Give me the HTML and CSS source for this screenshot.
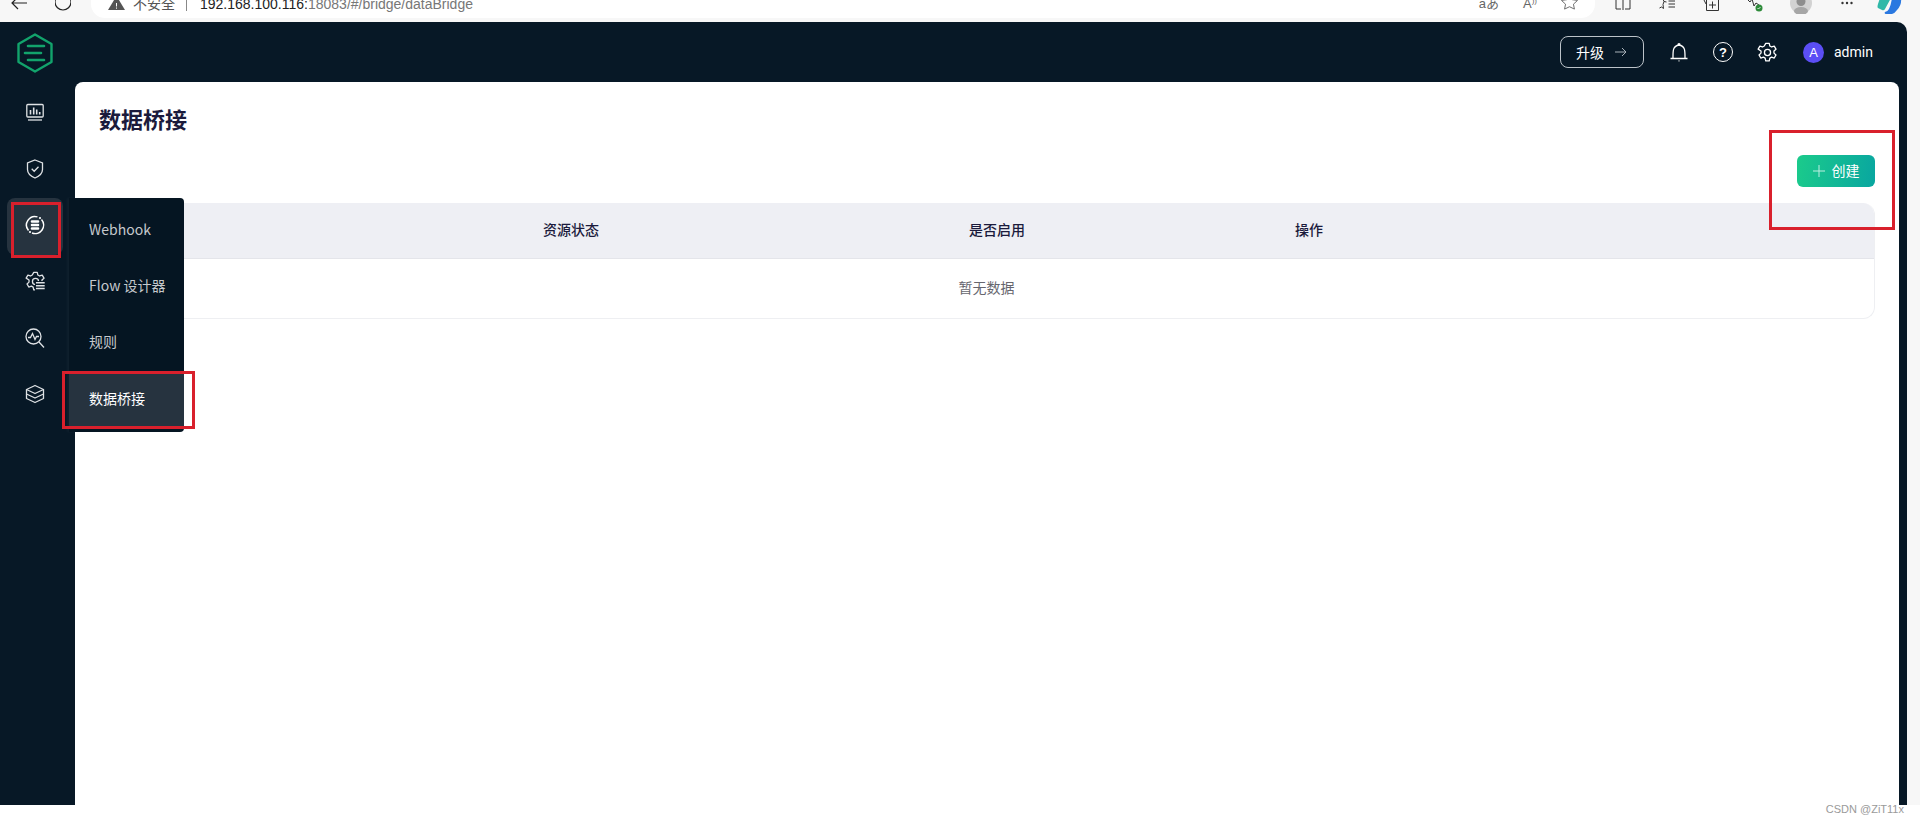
FILE: index.html
```html
<!DOCTYPE html>
<html lang="zh-CN">
<head>
<meta charset="utf-8">
<title>数据桥接</title>
<link rel="stylesheet" href="styles.css">
</head>
<body>
<div class="browser">
  <div class="nav">
    <svg class="ico" width="16" height="12" viewBox="0 0 16 12"><path d="M16 3H1M7-3 1 3l6 6" fill="none" stroke="#222" stroke-width="1.2"/></svg>
    <svg class="ico" width="16" height="12" viewBox="0 0 16 12"><path d="M2-3.300A8 8 0 1 0 14-3.300" fill="none" stroke="#222" stroke-width="1.200"/></svg>
  </div>
  <div class="url">
    <svg class="warn" width="17" height="14" viewBox="0 0 17 14"><path d="M8.500 0 17 14H0Z" fill="#555"/><path d="M8.500 7v3.500M8.500 11.500v1.200" stroke="#fff"/></svg>
    <span class="insecure">不安全</span>
    <span class="sep"></span>
    <span class="addr">192.168.100.116:<span class="addr-rest">18083/#/bridge/dataBridge</span></span>
    <span class="url-tools">
      <span class="tool-txt">aあ</span>
      <span class="tool-txt">A<sup>))</sup></span>
      <svg class="star" width="17" height="16" viewBox="0 0 18 16"><path d="M9 .5l2.600 5 5.900.8-4.300 4 1 5.200L9 13l-5.200 2.500 1-5.200-4.300-4 5.900-.8Z" fill="none" stroke="#666"/></svg>
    </span>
  </div>
  <div class="tools">
    <svg width="16" height="10" viewBox="0 0 16 10"><path d="M1-2v11h5M15-2v11h-5M8 0v10" fill="none" stroke="#333" stroke-width="1"/></svg>
    <svg width="16" height="10" viewBox="0 0 16 10"><path d="M3.500-2 5 1.500l-1 3 .5 4-2-1.500L.5 8M9.500 1H16M9.500 4H16M9.500 7H16M5 1.500l2.500.5" fill="none" stroke="#333"/></svg>
    <svg width="16" height="11" viewBox="0 0 16 11"><path d="M0-2l3 6M3.500-.500h12v11h-12ZM9.500 1.500v7M6 5h7" fill="none" stroke="#333"/></svg>
    <svg width="16" height="12" viewBox="0 0 16 12"><path d="M0-1 3 2l2-3 2 7 2-3 3 2" fill="none" stroke="#333"/><circle cx="12" cy="8" r="3.500" fill="#2e8b3a"/><path d="m10.500 8 1 1 2-2" fill="none" stroke="#fff" stroke-width=".8"/></svg>
    <svg class="profile" width="22" height="14" viewBox="0 0 22 14"><circle cx="11" cy="3" r="11" fill="#d2d2d2"/><circle cx="11" cy="1.500" r="4.500" fill="#8e8e8e"/><ellipse cx="11" cy="11" rx="7" ry="4" fill="#a6a6a6"/></svg>
    <svg class="dots" width="12" height="5" viewBox="0 0 12 5"><circle cx="1.500" cy="3" r="1.200" fill="#333"/><circle cx="6" cy="3" r="1.200" fill="#333"/><circle cx="10.500" cy="3" r="1.200" fill="#333"/></svg>
    <svg class="copilot" width="25" height="14" viewBox="0 0 25 14"><path d="M3 -2h11L8 9q-1 2-3 1L1 8Q0 7 1 4Z" fill="#2fb8a8"/><path d="M15-2h9q1 7-4 12-2 3-5 4H9q-2 0-1-2 5 0 7-14Z" fill="#2a78e0"/></svg>
  </div>
</div>

<div class="shell">
<div class="app">
  <aside class="side">
    <div class="logo">
      <svg width="36" height="40" viewBox="0 0 36 40"><path d="M18 1.500 34.500 11v18L18 38.500 1.500 29V11Z" fill="none" stroke="#12a36c" stroke-width="2.400" stroke-linejoin="round"/><path d="M11 13h16M8 20h16M11 27h16" stroke="#12a36c" stroke-width="2.600" stroke-linecap="round"/></svg>
    </div>
    <nav class="side-nav">
      <a class="side-item"><svg width="20" height="20" viewBox="0 0 20 20"><rect x="1.800" y="2.500" width="16.400" height="12.500" rx="1" fill="none" stroke="#dfe2e5" stroke-width="1.300"/><path d="M5.500 12.500V8M8.700 12.500V5.500M11.700 12.500V7.500M14.700 12.500V10" stroke="#dfe2e5" stroke-width="1.600"/><path d="M3 18h14" stroke="#dfe2e5" stroke-width="1.300"/></svg></a>
      <a class="side-item"><svg width="20" height="20" viewBox="0 0 20 20"><path d="M10 1 17.500 4v6.500c0 4-3.500 6.800-7.500 8.500-4-1.700-7.500-4.500-7.500-8.500V4Z" fill="none" stroke="#dfe2e5" stroke-width="1.300"/><path d="m6.700 9.700 2.500 2.500 4.300-4.500" fill="none" stroke="#dfe2e5" stroke-width="1.300"/></svg></a>
      <a class="side-item active"><svg width="20" height="20" viewBox="0 0 20 20" fill="none" stroke="#fff"><path d="M12.500 1.900A8.500 8.500 0 0 0 3.500 15.500M7 18A8.500 8.500 0 0 0 16.500 4.500" stroke-width="1.500"/><circle cx="15" cy="3" r="1.100" fill="#fff" stroke="none"/><circle cx="5" cy="17" r="1.100" fill="#fff" stroke="none"/><path d="M7 6.500h6M7 10h6M7 13.500h6" stroke-width="2.600" stroke-linecap="round"/></svg></a>
      <a class="side-item"><svg width="21" height="21" viewBox="0 0 24 24" fill="none" stroke="#dfe2e5" stroke-width="1.500" stroke-linejoin="round"><path d="M10 1.500h4l.7 3.100 2 1.100 3-1 2 3.500-2.300 2.100v2.400l2.300 2.100-2 3.500-3-1-2 1.100-.7 3.100h-4l-.7-3.100-2-1.100-3 1-2-3.500 2.300-2.100v-2.400L1.300 8.200l2-3.500 3 1 2-1.100Z"/><circle cx="12" cy="12" r="3.500"/><rect x="11.500" y="11.500" width="13" height="13" fill="#071826" stroke="none"/><path d="M12.500 13.500h10M12.500 16.800h10M12.500 20h10" stroke-width="1.700"/></svg></a>
      <a class="side-item"><svg width="20" height="20" viewBox="0 0 20 20"><circle cx="8.500" cy="8.500" r="7.500" fill="none" stroke="#dfe2e5" stroke-width="1.300"/><path d="M3 9.500h2.500L7.500 5.500l2.500 6 1.500-3H14M14 14l5 5.500" fill="none" stroke="#dfe2e5" stroke-width="1.300"/></svg></a>
      <a class="side-item"><svg width="20" height="20" viewBox="0 0 20 20" fill="none" stroke="#dfe2e5" stroke-width="1.300" stroke-linejoin="round"><path d="M10 1.500 18.500 5.500 10 9.500 1.500 5.500Z"/><path d="M1.500 5.500V10L10 14l8.500-4V5.500"/><path d="M1.500 10v4.500L10 18.500l8.500-4V10"/></svg></a>
    </nav>
  </aside>

  <div class="main">
    <header class="top">
      <button class="upgrade">升级<svg width="12" height="10" viewBox="0 0 12 10"><path d="M0 5h11M7 1l4 4-4 4" fill="none" stroke="#a9b1b8" stroke-width="1"/></svg></button>
      <svg class="bell" width="20" height="20" viewBox="0 0 20 20"><path d="M1.500 16.500H18.500M4 16.500C4 9 3.500 4 10 3c6.500 1 6 6 6 13.500M9 2.700a1 1 0 0 1 2 0M9.500 18.800h1" fill="none" stroke="#fff" stroke-width="1.300"/></svg>
      <span class="help">?</span>
      <svg class="gear" width="21" height="21" viewBox="0 0 24 24" fill="none" stroke="#fff" stroke-width="1.500" stroke-linejoin="round"><circle cx="12" cy="12" r="3.500"/><path d="M10 1.500h4l.7 3.100 2 1.100 3-1 2 3.500-2.300 2.100v2.400l2.300 2.100-2 3.500-3-1-2 1.100-.7 3.100h-4l-.7-3.100-2-1.100-3 1-2-3.500 2.300-2.100v-2.400L1.300 8.200l2-3.500 3 1 2-1.100Z"/></svg>
      <span class="user"><span class="avatar">A</span>admin</span>
    </header>
    <section class="content">
      <h1 class="title">数据桥接</h1>
      <div class="actions"><button class="create"><svg width="12" height="12" viewBox="0 0 12 12"><path d="M6 0v12M0 6h12" stroke="#bdeee0" stroke-width="1"/></svg><span class="create-label">创建</span></button></div>
      <div class="table">
        <div class="thead">
          <span class="col-status">资源状态</span>
          <span class="col-enable">是否启用</span>
          <span class="col-op">操作</span>
        </div>
        <div class="empty">暂无数据</div>
      </div>
    </section>
  </div>

  <div class="popup">
    <a class="pop-item">Webhook</a>
    <a class="pop-item">Flow 设计器</a>
    <a class="pop-item">规则</a>
    <a class="pop-item current">数据桥接</a>
  </div>
  <div class="mark mark-side"></div>
  <div class="mark mark-item"></div>
  <div class="mark mark-create"></div>
</div>
</div>
<div class="foot">CSDN @ZiT11x</div>
</body>
</html>
```

FILE: styles.css
```css
* { box-sizing: border-box; }
html, body { margin: 0; height: 823px; overflow: hidden; background: #fff; }
body { font-family: "Noto Sans CJK SC", "Inter", sans-serif; font-size: 14px; display: flex; flex-direction: column; }
svg { display: block; flex: none; }

.browser { height: 22px; background: #f7f7f7; display: flex; align-items: flex-start; overflow: hidden; flex: none; }
.nav { width: 91px; flex: none; display: flex; padding-left: 11px; gap: 28px; }
.url { width: 1504px; flex: none; height: 18px; background: #fff; border-radius: 0 0 14px 14px; display: flex; align-items: flex-end; padding-left: 17px; font-family: "Liberation Sans", "Noto Sans CJK SC", sans-serif; font-size: 14px; line-height: 18px; color: #333; }
.warn { margin-bottom: 8px; }
.insecure { margin: 0 0 5px 8px; color: #555; }
.sep { width: 1px; height: 14px; background: #888; margin: 0 13px 7px 11px; }
.addr { margin-bottom: 5px; color: #222; }
.addr-rest { color: #777; }
.url-tools { margin-left: auto; display: flex; align-items: flex-end; gap: 24px; padding-right: 17px; margin-bottom: 5px; color: #666; font-size: 13px; }
.tool-txt sup { font-size: 8px; }
.star { margin-bottom: 3px; }
.tools { flex: 1; display: flex; padding: 0 0 0 20px; gap: 28px; align-items: flex-start; }
.profile { margin-left: -1px; }
.dots { margin-left: 1px; }
.copilot { margin-left: -4px; }

.shell { height: 783px; flex: none; background: #f7f7f7; }
.app { height: 783px; width: 1907px; background: #071826; border-radius: 0 10px 0 0; display: flex; position: relative; }
.side { width: 75px; flex: none; }
.logo { height: 60px; padding: 11px 0 0 17px; }
.side-nav { display: flex; flex-direction: column; padding-top: 2px; }
.side-item { height: 56.400px; margin: 0 12px 0 7px; display: flex; align-items: center; justify-content: center; position: relative; }
.side-item svg { position: relative; }
.side-item.active::before { content: ""; position: absolute; inset: 1px 0 -2px; background: #26333f; border-radius: 8px; }
.main { flex: 1; display: flex; flex-direction: column; padding-right: 8px; min-width: 0; }
.top { height: 60px; display: flex; align-items: center; color: #fff; flex: none; padding-left: 1485px; }
.upgrade { width: 84px; height: 32px; flex: none; border: 1px solid #bcc3c9; border-radius: 8px; background: transparent; color: #fff; font: inherit; display: flex; align-items: center; padding: 0 0 0 15px; gap: 11px; }
.bell { margin-left: 25px; }
.help { width: 20px; height: 20px; flex: none; border: 1.500px solid #fff; border-radius: 50%; margin-left: 24px; display: flex; align-items: center; justify-content: center; font: 700 13px/1 "Liberation Sans", sans-serif; }
.gear { margin-left: 24px; }
.user { margin-left: 25px; display: flex; align-items: center; gap: 10px; font-family: "Roboto", sans-serif; white-space: nowrap; }
.avatar { width: 21px; height: 21px; border-radius: 50%; background: #5b4ef5; display: flex; align-items: center; justify-content: center; font-family: "Liberation Sans", sans-serif; font-size: 13px; }
.content { flex: 1; background: #fff; border-radius: 8px 8px 0 0; padding: 0 24px 0 25px; }
.title { margin: 0 0 0 -1px; padding-top: 20px; font-size: 22px; line-height: 32px; font-weight: 700; color: #1b1b3c; }
.actions { display: flex; justify-content: flex-end; margin-top: 21px; }
.create { width: 78px; height: 32px; border: 0; border-radius: 6px; background: linear-gradient(100deg, #1bcb8b, #09a6a0); color: #fff; font: inherit; font-size: 14px; display: flex; align-items: center; justify-content: center; gap: 7px; padding: 0; }
.create-label { margin-bottom: 2px; }
.table { margin-top: 16px; border-radius: 12px; border: 1px solid #eeeff2; border-top: 0; overflow: hidden; }
.thead { height: 56px; background: #eeeff4; border-bottom: 1px solid #e4e5ea; display: grid; grid-template-columns: 426px 426px 326px; padding: 0 0 4px 17px; align-items: center; font-weight: 500; color: #1b1b3c; }
.col-status { padding-left: 425px; white-space: nowrap; }
.col-enable { padding-left: 425px; white-space: nowrap; }
.col-op { padding-left: 325px; white-space: nowrap; }
.empty { height: 59px; padding: 0 2px 4px 0; display: flex; align-items: center; justify-content: center; color: #66666e; }
.popup { position: absolute; left: 69px; top: 176px; width: 115px; height: 234px; background: #051522; border-radius: 0 4px 4px 0; box-shadow: -2px 0 3px rgba(255,255,255,.04); padding-top: 3px; display: flex; flex-direction: column; color: #c5c9cd; }
.pop-item { height: 56px; flex: none; display: flex; align-items: center; padding: 0 0 1px 20px; white-space: nowrap; }
.pop-item.current { height: 54px; margin-top: 4px; padding-bottom: 4px; background: #26333f; color: #fff; }
.mark { position: absolute; border: 3px solid #d9202c; pointer-events: none; }
.mark-side { left: 11px; top: 180px; width: 50px; height: 56px; }
.mark-item { left: 62px; top: 349px; width: 133px; height: 58px; }
.mark-create { left: 1769px; top: 108px; width: 126px; height: 100px; }
.foot { height: 18px; padding: 0 16px 0 0; text-align: right; font: 11px/9px "Liberation Sans", sans-serif; color: #9a9a9a; }
```
